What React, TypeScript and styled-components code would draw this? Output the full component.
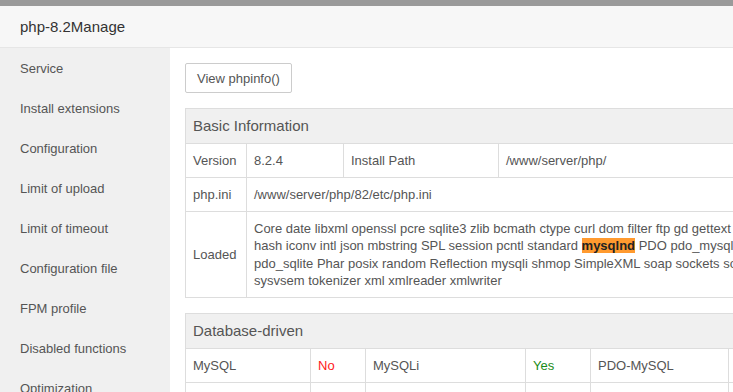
import * as React from 'react';
import styled, { createGlobalStyle } from 'styled-components';

const GlobalStyle = createGlobalStyle`
  html, body {
    margin: 0;
    padding: 0;
    background: #fff;
    overflow: hidden;
  }
  body {
    font-family: "Liberation Sans", Arial, sans-serif;
    font-size: 13px;
    color: #555;
  }
`;

const Frame = styled.div`
  width: 733px;
  height: 392px;
  border-top: 6px solid #9a9a9a;
  box-sizing: border-box;
  display: flex;
  flex-direction: column;
  overflow: hidden;
`;

const TitleBar = styled.div`
  height: 41px;
  flex: none;
  background: #f7f7f7;
  border-bottom: 1px solid #e6e6e6;
  display: flex;
  align-items: center;
  padding-left: 20px;
  font-size: 15px;
  color: #333;
`;

const Body = styled.div`
  flex: 1;
  display: flex;
  min-height: 0;
`;

const Sidebar = styled.ul`
  list-style: none;
  margin: 0;
  padding: 0;
  width: 170px;
  flex: none;
  background: #f0f0f0;
`;

const NavItem = styled.li`
  height: 40px;
  line-height: 41px;
  padding-left: 20px;
  color: #555;
  white-space: nowrap;
`;

const Content = styled.div`
  flex: none;
  width: 596px;
  padding: 15px;
  display: flex;
  flex-direction: column;
  align-items: flex-start;
  gap: 15px;
  & > * {
    flex: none;
  }
`;

const Button = styled.button`
  height: 30px;
  padding: 0 11px;
  background: #fff;
  border: 1px solid #ccc;
  border-radius: 2px;
  font-family: inherit;
  font-size: 13px;
  color: #555;
`;

const Table = styled.table`
  width: 100%;
  border-collapse: collapse;
  table-layout: fixed;
  & td, & th {
    border: 1px solid #ddd;
    padding: 8px 7px;
    line-height: 17px;
    text-align: left;
    font-weight: normal;
    vertical-align: middle;
  }
`;

const HeadCell = styled.th`
  background: #f0f0f0;
  font-size: 15px;
  color: #555;
  && {
    line-height: 18px;
  }
`;

const Cell = styled.td<{ $tone?: 'yes' | 'no' }>`
  color: ${(p) => (p.$tone === 'yes' ? '#1a8c1a' : p.$tone === 'no' ? '#ff1a1a' : '#555')};
  white-space: nowrap;
  overflow: hidden;
`;

const WrapCell = styled.td`
  color: #555;
  white-space: nowrap;
  overflow: hidden;
  && {
    line-height: 17.25px;
  }
`;

const Mark = styled.span`
  background: #ff9a2f;
  color: #222;
  font-weight: bold;
`;

const navItems = [
  'Service',
  'Install extensions',
  'Configuration',
  'Limit of upload',
  'Limit of timeout',
  'Configuration file',
  'FPM profile',
  'Disabled functions',
  'Optimization',
];

export default function App() {
  return (
    <>
      <GlobalStyle />
      <Frame>
        <TitleBar>php-8.2Manage</TitleBar>
        <Body>
          <Sidebar>
            {navItems.map((n) => (
              <NavItem key={n}>{n}</NavItem>
            ))}
          </Sidebar>
          <Content>
            <Button>View phpinfo()</Button>
            <Table>
              <colgroup>
                <col style={{ width: 61 }} />
                <col style={{ width: 97 }} />
                <col style={{ width: 155 }} />
                <col />
              </colgroup>
              <thead>
                <tr>
                  <HeadCell colSpan={4}>Basic Information</HeadCell>
                </tr>
              </thead>
              <tbody>
                <tr>
                  <Cell>Version</Cell>
                  <Cell>8.2.4</Cell>
                  <Cell>Install Path</Cell>
                  <Cell>/www/server/php/</Cell>
                </tr>
                <tr>
                  <Cell>php.ini</Cell>
                  <Cell colSpan={3}>/www/server/php/82/etc/php.ini</Cell>
                </tr>
                <tr>
                  <Cell>Loaded</Cell>
                  <WrapCell colSpan={3}>
                    Core date libxml openssl pcre sqlite3 zlib bcmath ctype curl dom filter ftp gd gettext
                    <br />
                    hash iconv intl json mbstring SPL session pcntl standard <Mark>mysqlnd</Mark> PDO pdo_mysql
                    <br />
                    pdo_sqlite Phar posix random Reflection mysqli shmop SimpleXML soap sockets sodium
                    <br />
                    sysvsem tokenizer xml xmlreader xmlwriter
                  </WrapCell>
                </tr>
              </tbody>
            </Table>
            <Table>
              <colgroup>
                <col style={{ width: 125 }} />
                <col style={{ width: 55 }} />
                <col style={{ width: 160 }} />
                <col style={{ width: 65 }} />
                <col style={{ width: 138 }} />
                <col />
              </colgroup>
              <thead>
                <tr>
                  <HeadCell colSpan={6}>Database-driven</HeadCell>
                </tr>
              </thead>
              <tbody>
                <tr>
                  <Cell>MySQL</Cell>
                  <Cell $tone="no">No</Cell>
                  <Cell>MySQLi</Cell>
                  <Cell $tone="yes">Yes</Cell>
                  <Cell>PDO-MySQL</Cell>
                  <Cell $tone="yes">Yes</Cell>
                </tr>
                <tr>
                  <Cell>SQLite</Cell>
                  <Cell $tone="yes">Yes</Cell>
                  <Cell>PDO-SQLite</Cell>
                  <Cell $tone="yes">Yes</Cell>
                  <Cell>PostgreSQL</Cell>
                  <Cell $tone="no">No</Cell>
                </tr>
              </tbody>
            </Table>
          </Content>
        </Body>
      </Frame>
    </>
  );
}
